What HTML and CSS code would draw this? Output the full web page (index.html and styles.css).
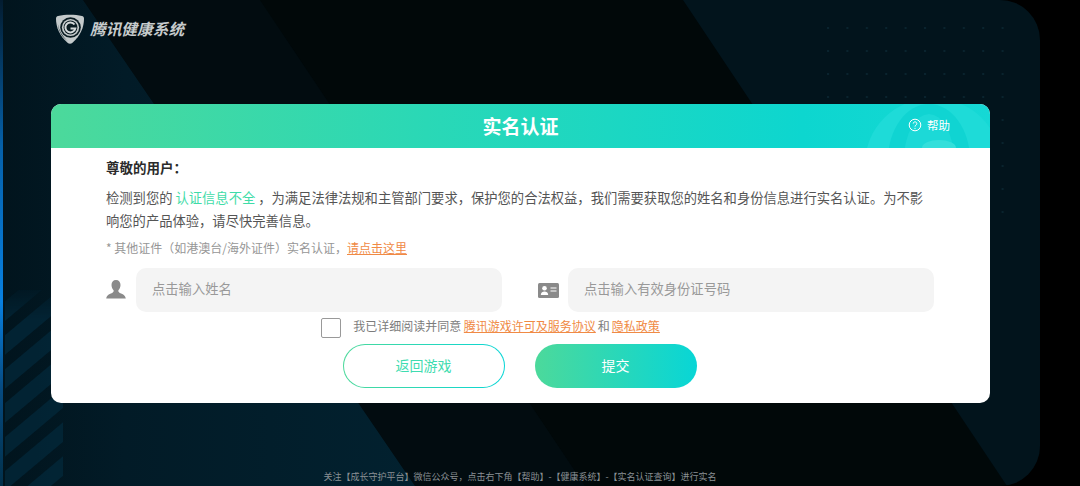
FILE: index.html
```html
<!DOCTYPE html>
<html lang="zh-CN">
<head>
<meta charset="utf-8">
<title>实名认证</title>
<link rel="stylesheet" href="styles.css">
</head>
<body>
<main class="screen">
  <svg class="backdrop" viewBox="0 0 1040 486" aria-hidden="true">
    <defs>
      <linearGradient id="leftFade" x1="0" y1="0" x2="1" y2="0">
        <stop offset="0" stop-color="#01141d"/>
        <stop offset="0.3" stop-color="#021b27"/>
        <stop offset="1" stop-color="#02212f"/>
      </linearGradient>
      <linearGradient id="blueBar" x1="0" y1="0" x2="0" y2="1">
        <stop offset="0" stop-color="#031c30"/>
        <stop offset="0.3" stop-color="#0560a8"/>
        <stop offset="0.62" stop-color="#0880e0"/>
        <stop offset="0.8" stop-color="#064a80"/>
        <stop offset="1" stop-color="#02304a"/>
      </linearGradient>
      <linearGradient id="hatchFade" x1="0" y1="0" x2="0" y2="1">
        <stop offset="0" stop-color="#fff" stop-opacity=".15"/>
        <stop offset="0.15" stop-color="#fff" stop-opacity=".7"/>
        <stop offset="1" stop-color="#fff" stop-opacity=".7"/>
      </linearGradient>
      <mask id="hatchMask">
        <rect x="5" y="290" width="58" height="196" fill="url(#hatchFade)"/>
      </mask>
      <pattern id="hatch" width="26" height="26" patternUnits="userSpaceOnUse" patternTransform="rotate(-40)">
        <rect width="26" height="15" fill="#03293c"/>
      </pattern>
      <pattern id="dots" width="19.4" height="23" patternUnits="userSpaceOnUse" x="827" y="27">
        <circle cx="1" cy="1" r="1" fill="#0b2833"/>
      </pattern>
    </defs>
    <rect width="1040" height="486" fill="#010809"/>
    <polygon points="83,0 260,0 585,486 415,486" fill="#020c10"/>
    <polygon points="0,0 83,0 415,486 0,486" fill="url(#leftFade)"/>
    <polygon points="683,0 1040,0 1040,486 1007,486" fill="#02141c"/>
    <rect x="5" y="290" width="58" height="196" fill="url(#hatch)" mask="url(#hatchMask)"/>
    <rect x="827" y="27" width="182" height="190" fill="url(#dots)"/>
    <rect width="3" height="486" fill="url(#blueBar)"/>
  </svg>

  <header class="brand">
    <svg class="brand-logo" viewBox="0 0 30 30" aria-hidden="true">
      <path d="M1 4.500C1 3 2 2.400 3 2 10 .3 20 .3 27 2c1 .4 2 1 2 2.500 0 9-3.500 17-11.500 24.300-1.500 1.300-3.500 1.300-5 0C4.500 21.500 1 13.500 1 4.500Z" fill="#c4cacb"/>
      <path d="M2.800 9.500C4 17 8 23.500 13.500 27.500 7.500 24 3.500 17.500 2.800 9.500Z" fill="#0a1c22"/>
      <circle cx="15.500" cy="13.500" r="10.300" fill="#0a1c22"/>
      <circle cx="15.500" cy="13.500" r="8.600" fill="#c4cacb"/>
      <circle cx="15.500" cy="13.500" r="6.900" fill="#0a1c22"/>
      <path d="M19.500 10.500a5 5 0 1 0 .8 4H15.500" fill="none" stroke="#d4d9da" stroke-width="2"/>
    </svg>
    <span class="brand-name">腾讯健康系统</span>
  </header>

  <section class="card">
    <div class="card-head">
      <svg class="head-art" viewBox="0 0 123 44" aria-hidden="true">
        <ellipse cx="66" cy="60" rx="68" ry="66" fill="#1edbd8"/>
        <ellipse cx="62" cy="56" rx="41" ry="56" fill="#10d4d2"/>
        <ellipse cx="62" cy="56" rx="25" ry="46" fill="#1cd9d7"/>
        <ellipse cx="72" cy="44" rx="17" ry="8" fill="#34dfdb"/>
      </svg>
      <h1 class="card-title">实名认证</h1>
      <div class="help">
        <svg class="help-icon" viewBox="0 0 14 14" aria-hidden="true">
          <circle cx="7" cy="7" r="5.800" fill="none" stroke="#fff" stroke-width="1"/>
          <path d="M5.200 5.600a1.800 1.800 0 1 1 2.800 1.500c-.7.500-1 .8-1 1.500" fill="none" stroke="#fff" stroke-width="1"/>
          <circle cx="7" cy="10.300" r=".6" fill="#fff"/>
        </svg>
        <span>帮助</span>
      </div>
    </div>
    <div class="card-body">
      <p class="greeting">尊敬的用户：</p>
      <p class="intro">检测到您的 <em class="hl">认证信息不全</em> ，为满足法律法规和主管部门要求，保护您的合法权益，我们需要获取您的姓名和身份信息进行实名认证。为不影响您的产品体验，请尽快完善信息。</p>
      <p class="note">* 其他证件（如港澳台/海外证件）实名认证，<a class="link" href="#">请点击这里</a></p>
      <div class="fields">
        <label class="field">
          <svg class="field-icon" viewBox="0 0 20 22" aria-hidden="true">
            <path d="M10 1c2.900 0 4.500 2.100 4.500 5 0 2.200-.9 4.200-2.100 5.300-.3 1.300.3 2.100 1.600 2.600 2.500 1 5.100 1.900 5.800 5.600H.2c.7-3.700 3.300-4.600 5.800-5.600 1.300-.5 1.900-1.300 1.600-2.600C6.400 10.200 5.500 8.200 5.500 6 5.500 3.100 7.100 1 10 1Z" fill="#8a8a8a"/>
          </svg>
          <input class="field-input" type="text" placeholder="点击输入姓名">
        </label>
        <label class="field">
          <svg class="field-icon" viewBox="0 0 20 22" aria-hidden="true">
            <rect x="0" y="4" width="21" height="15" rx="1.500" fill="#8a8a8a"/>
            <circle cx="6.500" cy="9.300" r="2.300" fill="#fff"/>
            <path d="M2.800 16c.2-2.600 1.700-3.500 3.700-3.500s3.500.9 3.700 3.500Z" fill="#fff"/>
            <path d="M12.500 9h6M12.500 12h6" stroke="#fff" stroke-width="1.100"/>
          </svg>
          <input class="field-input" type="text" placeholder="点击输入有效身份证号码">
        </label>
      </div>
      <div class="agree">
        <span class="checkbox"></span>
        <span class="agree-text">我已详细阅读并同意 <a class="link" href="#">腾讯游戏许可及服务协议</a><span class="agree-and">和</span><a class="link" href="#">隐私政策</a></span>
      </div>
      <div class="actions">
        <button class="btn btn-ghost" type="button">返回游戏</button>
        <button class="btn btn-solid" type="button">提交</button>
      </div>
    </div>
  </section>

  <footer class="hint">关注【成长守护平台】微信公众号，点击右下角【帮助】-【健康系统】-【实名认证查询】进行实名</footer>
</main>
</body>
</html>
```

FILE: styles.css
```css
* { box-sizing: border-box; }

html, body {
  margin: 0;
  height: 100%;
  background: #000;
  overflow: hidden;
}

body {
  font-family: "Noto Sans CJK SC", "Noto Sans", sans-serif;
}

.screen {
  position: relative;
  width: 1040px;
  height: 486px;
  border-radius: 0 40px 40px 0;
  overflow: hidden;
  display: flex;
  flex-direction: column;
  padding-left: 51px;
}

.backdrop {
  position: absolute;
  inset: 0;
  width: 100%;
  height: 100%;
}

.brand {
  position: relative;
  height: 104px;
  display: flex;
  align-items: flex-start;
  gap: 5px;
  padding: 14px 0 0 4px;
}

.brand-logo {
  width: 30px;
  height: 30px;
}

.brand-name {
  font-size: 15.700px;
  line-height: 30px;
  font-weight: 700;
  font-style: italic;
  color: #c6cbcc;
}

.card {
  position: relative;
  width: 939px;
  height: 299px;
  border-radius: 10px;
  background: #fff;
  overflow: hidden;
  flex: none;
}

.card-head {
  position: relative;
  height: 44px;
  background: linear-gradient(90deg, #4cd99b 0%, #2ad8b6 40%, #0dd6cf 80%, #16d8d5 100%);
  display: flex;
  align-items: center;
  justify-content: center;
}

.head-art {
  position: absolute;
  right: 0;
  top: 0;
  width: 123px;
  height: 44px;
}

.card-title {
  position: relative;
  margin: 0;
  font-size: 19px;
  line-height: 44px;
  font-weight: 700;
  color: #fff;
}

.help {
  position: absolute;
  left: 857px;
  top: 0;
  height: 42px;
  display: flex;
  align-items: center;
  gap: 5px;
  font-size: 11.500px;
  color: #fff;
}

.help-icon {
  width: 14px;
  height: 14px;
}

.card-body {
  padding: 7px 55px 0;
}

.greeting {
  margin: 0;
  font-family: "Noto Sans CJK TC", "Noto Sans CJK SC", sans-serif;
  font-size: 13.500px;
  line-height: 24px;
  font-weight: 700;
  color: #2b2b2b;
}

.intro {
  margin: 7px 0 0;
  font-size: 13.300px;
  line-height: 23px;
  color: #555;
}

.hl {
  font-style: normal;
  color: #3fdca8;
}

.note {
  margin: 6px 0 0;
  font-size: 12px;
  line-height: 20px;
  color: #969696;
}

.link {
  color: #f08a45;
  text-decoration: underline;
}

.fields {
  display: flex;
  gap: 36px;
  margin-top: 10px;
}

.field {
  display: flex;
  align-items: center;
  gap: 10px;
}

.field-icon {
  width: 20px;
  height: 22px;
  flex: none;
  overflow: visible;
}

.field-input {
  width: 366px;
  height: 44px;
  border: 0;
  outline: 0;
  border-radius: 10px;
  background: #f4f4f4;
  padding: 0 16px 3px;
  font: inherit;
  font-size: 13.300px;
  color: #333;
}

.field-input::placeholder {
  color: #999;
  opacity: 1;
}

.agree {
  display: flex;
  align-items: center;
  justify-content: center;
  gap: 12px;
  height: 20px;
  margin: 6px 0 0 -60px;
  font-size: 12px;
  color: #7c7c7c;
}

.agree-text {
  padding-bottom: 5px;
}

.agree-and {
  margin: 0 2px;
}

.checkbox {
  width: 20px;
  height: 20px;
  border: 1.500px solid #999;
  border-radius: 2px;
}

.actions {
  display: flex;
  justify-content: center;
  gap: 30px;
  margin: 6px 0 0 -2px;
}

.btn {
  width: 162px;
  height: 44px;
  border-radius: 22px;
  font: inherit;
  font-size: 14px;
  padding: 0 0 3px;
}

.btn-ghost {
  border: 1.500px solid transparent;
  background: linear-gradient(#fff, #fff) padding-box, linear-gradient(90deg, #4cd99b, #08d6d6) border-box;
  color: #3fdcb0;
}

.btn-solid {
  border: 0;
  background: linear-gradient(90deg, #4cd99b, #08d6d6);
  color: #fff;
}

.hint {
  position: relative;
  margin-top: auto;
  margin-left: -51px;
  height: 19px;
  line-height: 19px;
  text-align: center;
  font-size: 9px;
  color: #8a9094;
}
```
